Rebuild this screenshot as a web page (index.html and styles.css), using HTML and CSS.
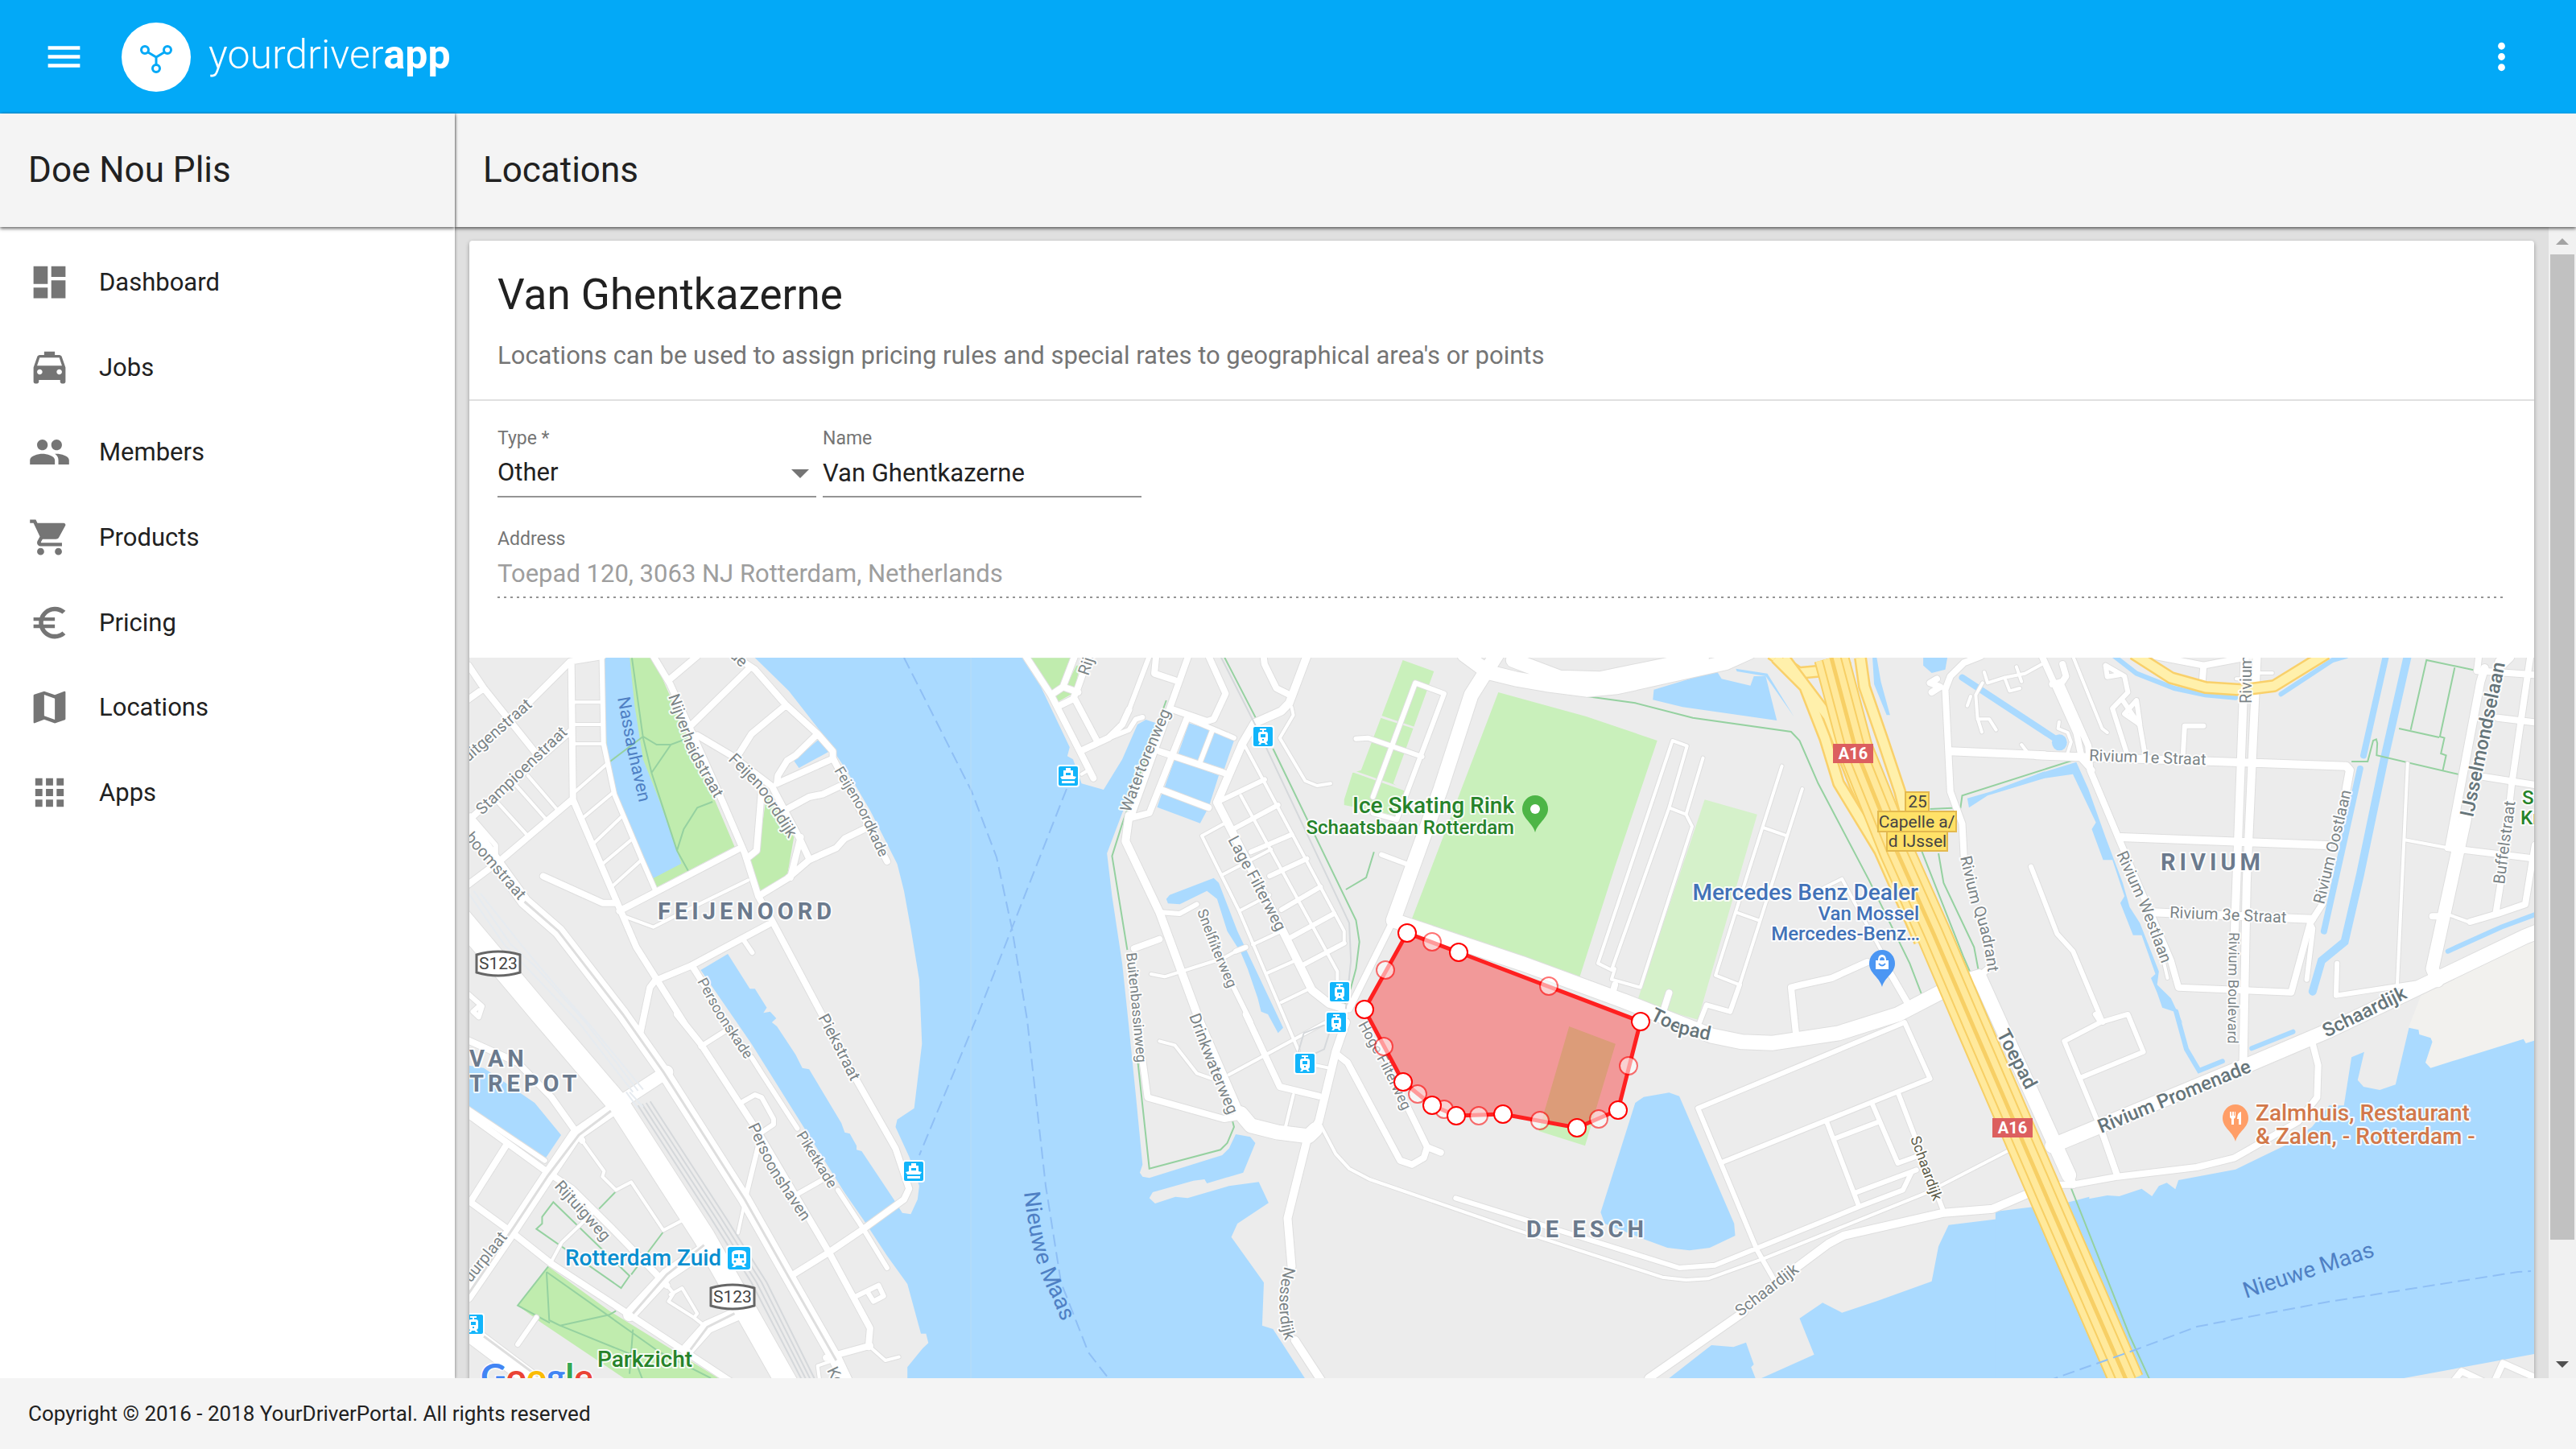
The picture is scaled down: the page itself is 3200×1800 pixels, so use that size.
FILE: index.html
```html
<!DOCTYPE html>
<html lang="en">
<head>
<meta charset="utf-8">
<meta name="viewport" content="width=device-width, initial-scale=1">
<title>Locations - yourdriverapp</title>
<link rel="stylesheet" href="styles.css">
</head>
<body>
<header class="topbar">
  <button class="icon-button" type="button" aria-label="Toggle menu"><svg class="icon" viewBox="0 0 24 24"><path d="M3 18h18v-2H3v2zm0-5h18v-2H3v2zm0-7v2h18V6H3z"/></svg></button>
  <a class="brand" href="#">
    <svg class="brand-mark" viewBox="0 0 86 86" aria-hidden="true"><circle class="disc" cx="43" cy="43" r="43"/><path d="M33 37l10 6 10-6M43 43v9"/><circle cx="29" cy="34" r="4.500"/><circle cx="57" cy="34" r="4.500"/><circle cx="43" cy="57" r="4.500"/></svg>
    <span class="brand-name">yourdriver<b>app</b></span>
  </a>
  <button class="icon-button more" type="button" aria-label="More"><svg class="icon" viewBox="0 0 24 24"><path d="M12 8c1.100 0 2-.9 2-2s-.9-2-2-2-2 .9-2 2 .9 2 2 2zm0 2c-1.100 0-2 .9-2 2s.9 2 2 2 2-.9 2-2-.9-2-2-2zm0 6c-1.100 0-2 .9-2 2s.9 2 2 2 2-.9 2-2-.9-2-2-2z"/></svg></button>
</header>

<div class="shell">
  <aside class="sidebar">
    <h2 class="bar">Doe Nou Plis</h2>
    <nav class="menu">
      <a href="#"><svg class="icon" viewBox="0 0 24 24"><path d="M3 13h8V3H3v10zm0 8h8v-6H3v6zm10 0h8V11h-8v10zm0-18v6h8V3h-8z"/></svg>Dashboard</a>
      <a href="#"><svg class="icon" viewBox="0 0 24 24"><path d="M18.920 6.010C18.720 5.420 18.160 5 17.500 5H15V3H9v2H6.500c-.66 0-1.210.42-1.420 1.010L3 12v8c0 .55.45 1 1 1h1c.55 0 1-.45 1-1v-1h12v1c0 .55.45 1 1 1h1c.55 0 1-.45 1-1v-8l-2.080-5.990zM6.500 16c-.83 0-1.500-.67-1.500-1.500S5.670 13 6.500 13s1.500.67 1.500 1.500S7.330 16 6.500 16zm11 0c-.83 0-1.500-.67-1.500-1.500s.67-1.500 1.500-1.500 1.500.67 1.500 1.500-.67 1.500-1.500 1.500zM5 11l1.500-4.500h11L19 11H5z"/></svg>Jobs</a>
      <a href="#"><svg class="icon" viewBox="0 0 24 24"><path d="M16 11c1.660 0 2.990-1.340 2.990-3S17.660 5 16 5s-3 1.340-3 3 1.340 3 3 3zm-8 0c1.660 0 2.990-1.340 2.990-3S9.660 5 8 5 5 6.340 5 8s1.340 3 3 3zm0 2c-2.330 0-7 1.170-7 3.500V19h14v-2.500c0-2.330-4.670-3.500-7-3.500zm8 0c-.29 0-.62.020-.97.050 1.160.84 1.970 1.970 1.970 3.450V19h6v-2.500c0-2.330-4.670-3.500-7-3.500z"/></svg>Members</a>
      <a href="#"><svg class="icon" viewBox="0 0 24 24"><path d="M7 18c-1.100 0-1.990.9-1.990 2S5.900 22 7 22s2-.9 2-2-.9-2-2-2zM1 2v2h2l3.600 7.590-1.350 2.450c-.16.280-.25.610-.25.960 0 1.100.9 2 2 2h12v-2H7.420c-.14 0-.25-.11-.25-.25l.03-.12.9-1.630h7.450c.75 0 1.410-.41 1.750-1.030l3.580-6.490c.08-.14.120-.31.120-.48 0-.55-.45-1-1-1H5.210l-.94-2H1zm16 16c-1.100 0-1.990.9-1.990 2s.89 2 1.990 2 2-.9 2-2-.9-2-2-2z"/></svg>Products</a>
      <a href="#"><svg class="icon" viewBox="0 0 24 24"><path d="M15 18.500c-2.510 0-4.680-1.420-5.760-3.500H15v-2H8.580c-.05-.33-.08-.66-.08-1s.03-.67.080-1H15V9H9.240C10.320 6.920 12.500 5.500 15 5.500c1.610 0 3.090.59 4.230 1.570L21 5.300C19.410 3.870 17.300 3 15 3c-3.920 0-7.240 2.510-8.480 6H3v2h3.060c-.04.33-.06.66-.06 1s.02.67.06 1H3v2h3.520c1.240 3.490 4.560 6 8.480 6 2.310 0 4.410-.87 6-2.300l-1.780-1.770c-1.130.98-2.600 1.570-4.220 1.570z"/></svg>Pricing</a>
      <a href="#"><svg class="icon" viewBox="0 0 24 24"><path d="M20.500 3l-.16.030L15 5.100 9 3 3.360 4.900c-.21.070-.36.250-.36.480V20.500c0 .28.220.5.500.5l.16-.03L9 18.900l6 2.100 5.640-1.900c.21-.07.36-.25.360-.48V3.500c0-.28-.22-.5-.5-.5zM15 19l-6-2.110V5l6 2.110V19z"/></svg>Locations</a>
      <a href="#"><svg class="icon" viewBox="0 0 24 24"><path d="M4 8h4V4H4v4zm6 12h4v-4h-4v4zm-6 0h4v-4H4v4zm0-6h4v-4H4v4zm6 0h4v-4h-4v4zm6-10v4h4V4h-4zm-6 4h4V4h-4v4zm6 6h4v-4h-4v4zm0 6h4v-4h-4v4z"/></svg>Apps</a>
    </nav>
  </aside>

  <main class="content">
    <h2 class="bar">Locations</h2>
    <div class="viewport">
      <div class="scroller">
        <section class="card">
          <div class="card-head">
            <h1>Van Ghentkazerne</h1>
            <p>Locations can be used to assign pricing rules and special rates to geographical area's or points</p>
          </div>
          <form class="form">
            <div class="row">
              <div class="field">
                <label for="type">Type *</label>
                <div class="select"><select id="type"><option>Other</option></select><svg viewBox="0 0 22 11" aria-hidden="true"><path d="M0 0h22L11 11z"/></svg></div>
              </div>
              <div class="field">
                <label for="name">Name</label>
                <input id="name" type="text" value="Van Ghentkazerne">
              </div>
            </div>
            <div class="field wide">
              <label for="address">Address</label>
              <input id="address" type="text" value="Toepad 120, 3063 NJ Rotterdam, Netherlands" disabled>
            </div>
          </form>

          <svg class="map" viewBox="583 817 2565 1000" role="img" aria-label="Map of Rotterdam around Toepad">
            <defs>
              <g id="tram"><rect class="halo" x="-14" y="-14" width="28" height="28" rx="4"/><rect class="transit" x="-12" y="-12" width="24" height="24" rx="2"/><path class="white" d="M-4 -10h8v2h-3v2h2q3 0 3 3v7q0 2-2 3l2 3h-3l-1-2h-4l-1 2h-3l2-3q-2-1-2-3v-7q0-3 3-3h2v-2h-3z"/><path class="transit" d="M-3 -3h6v4h-6zM-1 3h2v2h-2z"/></g>
              <g id="train"><rect class="halo" x="-16" y="-16" width="32" height="32" rx="4"/><rect class="transit" x="-14" y="-14" width="28" height="28" rx="3"/><path class="white" d="M-9 -6q0-4 9-4t9 4v11q0 2-3 3l3 3h-4l-2-2h-6l-2 2h-4l3-3q-3-1-3-3z"/><path class="transit" d="M-6 -5h5v5h-5zM1 -5h5v5h-5z"/><circle class="transit" cx="-5" cy="4" r="1.500"/><circle class="transit" cx="5" cy="4" r="1.500"/></g>
              <g id="ferry"><rect class="halo" x="-14" y="-14" width="28" height="28" rx="4"/><rect class="transit" x="-12" y="-12" width="24" height="24" rx="2"/><path class="white" d="M-3 -10h6v3h3v7l4 1-2 3h-16l-2-3 4-1v-7h3zM-8 6h16v3h-16z"/><path class="transit" d="M-3 -4h6v3h-6z"/></g>
              <path id="pin" d="M0 29C-3 17-16 12-16 0A16 17 0 0 1 16 0C16 12 3 17 0 29z"/>
              <path id="shield" d="M-27 -11Q0 -19 27 -11V11Q0 19-27 11z"/>

              <!-- Street network; drawn once as casing and once as fill -->
              <g id="streets" transform="matrix(.42092 0 0 .33333 580 810)">
                <g>
                  <path class="w8" d="M5 50L50 135L215 395M0 180L50 135M0 395L190 180L305 35L400 15M308 35L313 550L500 1100L640 1380M20 610L310 290M0 870L100 775L310 550M225 835L400 935H435M450 965L800 735M550 15L600 120L735 500L820 750L860 910L900 1000L1060 1380M600 100L680 15M660 275L830 65M680 310L780 385L900 500L980 690L1010 770M790 15L850 65L940 195L1035 305L1080 370V395L1240 780M800 385L840 305L940 200M915 490L1075 400M915 490L918 460L945 405L970 385L1035 305M945 585L1010 540L1050 530L1100 500M870 510L855 740L830 765M860 910L945 845L1010 775L1090 730L1115 695L1180 655M985 690L955 840M555 1225L660 1170L890 1015M555 1225L540 1250L510 1430M665 1170L700 1240"/>
                  <path class="w5" d="M10 610L85 720V770M398 15L403 340L435 530L515 770L555 885M815 1070L842 1120M0 1270L45 1320L35 1360L18 1340L40 1315"/>
                  <path class="w3" d="M310 187H398M310 270H400M315 342H403M320 520L415 415M340 620L430 525M375 712L458 612M400 790L485 700M427 875L515 775M180 460L265 585M130 475L235 625M90 560L180 685M830 850L620 980L550 1025L465 985"/>
                  <path class="w14" d="M0 630L90 790L170 930L270 1040L460 1350L580 1565L820 2040L950 2330L1090 2640L1120 2720"/>
                  <path class="w26" d="M-40 960L220 1350L450 1690L700 2180L960 2760"/>
                </g>
                <g transform="translate(0 1350)">
                  <path class="w14" d="M440 345L320 450L240 600L130 810L0 1050M450 330L590 215M480 1120L590 970L720 860M650 1250L710 1165L800 1115"/>
                  <path class="w22" d="M0 1180L200 1370"/>
                  <path class="w8" d="M0 95L150 180L250 310L340 470M0 370L120 480L240 590L310 650L430 800L560 970L590 1010M0 690L130 810L250 930L480 1120L780 1370M120 480L10 700M1060 1280L1190 1235M950 980L1065 890L1170 800L1290 690L1305 650L1265 500L1150 245L1060 30M620 0L690 110L860 440L1070 890L1190 1170L1185 1240"/>
                  <path class="w5" d="M0 350L230 545M690 120L765 60M815 325L850 300L870 310L905 390V410L870 440M1170 800L1240 945M860 490L825 670M975 670L1045 620M870 220L840 160M975 425L870 220M1095 655L1170 800M1150 1050L1215 1010L1230 1050L1200 1070L1185 1040M150 1230L205 1130"/>
                  <path class="w3" d="M345 480L405 585L400 605L440 655L485 625L580 805L640 765M250 920L280 850L380 730M590 1010L610 1040L595 1070L670 1130L680 1115L635 1020L600 1045M670 1130L700 1160M1190 1240L1235 1290L1275 1277M825 670L800 815M1040 1356L1035 1310L1080 1290"/>
                </g>
                <g transform="translate(1544 0)">
                  <path class="w8" d="M105 15L180 160L265 370L305 470M180 160L215 130L250 15M205 200L245 175L260 130L292 15M215 130L260 150M250 175L315 330M265 370L350 320L390 270L410 215M585 15L530 210L420 600M490 15L485 80L545 105M645 15L695 155L660 250L640 258L530 210M410 620L470 600L580 250M500 370L690 450M510 515L645 580M807 15L810 45L845 135L885 160M425 1105L500 1070M1190 1000L1060 1330"/>
                  <path class="w10" d="M410 610L400 705L500 970L620 1380M935 15L883 190L860 220L780 265L745 340L670 560L860 1030L950 1260L1000 1310L1050 1330"/>
                  <path class="w5" d="M350 320L410 290L430 250L450 243M410 215L470 15M580 245L720 320M655 295L620 410M670 560L810 475M710 665L850 570M770 745L890 680M825 835L935 770M860 960L975 875M885 1065L1015 975M925 1165L1045 1085M505 970L560 975L610 940M725 1115L755 1100M715 1240L770 1380M1130 600L1200 625L1340 155L1255 115L1130 540M1080 323L1115 320L1275 390M1155 755L1240 795"/>
                  <path class="w3" d="M890 205L895 235L855 320L930 480L965 498L1005 490M750 345L1045 1040V1085M740 535L1025 1190V1230M690 640L625 685L735 965L910 1485M685 830L830 735M735 965L825 905M775 1090L860 1040M820 1195L900 1150M860 1305L950 1250M475 1200L515 1210L690 1140L725 1115M270 455L290 440"/>
                  <path class="w18" d="M1500 0L1470 60L1420 160L1330 510L1190 1000L1568 1160L1870 1300L1970 1350L2130 1430L2220 1453L2310 1457L2505 1420L2680 1350L2825 1255"/>
                  <path class="w18" d="M1400 10L1470 75L1550 100L1640 120L1760 140L1850 130L2170 40L2240 0M1544 30L1680 95L1800 100L2100 22"/>
                </g>
                <g transform="translate(1544 1350)">
                  <path class="w10" d="M1050 30L1020 140L970 400L935 470L878 760L890 940M900 1215L980 1370"/>
                  <path class="w18" d="M740 370L770 415L850 440L940 454L960 430"/>
                  <path class="w10" d="M620 30L740 380"/>
                  <path class="w8" d="M755 0L855 270L970 305M450 170L465 310L690 390L740 380M1020 145L1055 180L1210 545L1245 560L1280 535L1290 495L1230 340M1290 495L1330 515"/>
                  <path class="w3" d="M500 100L545 115L610 220L655 240M705 225L990 30M895 300L870 430M960 190L1000 200M970 400L1020 520L1060 575L1120 615L1544 800L1984 980L2054 990L2119 985L2284 910L2764 665L3010 505"/>
                </g>
                <g transform="translate(3088 0)">
                  <path class="w3" d="M250 1160L470 330L513 350L460 580L290 1185ZM460 580L510 605M560 395L510 605L528 650L375 1250L290 1220L300 1180M793 425L597 1205L668 1240L853 510M740 655L808 685M658 970L725 1000M1390 75L1400 115L1450 95L1510 80L1568 40M1385 115L1365 160L1370 245L1383 298M1370 250L1405 250L1425 290M1450 95L1465 145L1495 135M1485 55L1500 110M1340 200L1350 165M1500 345L1515 370M915 880L970 845L1010 940L1085 1110"/>
                  <path class="w8" d="M300 1240L290 1285M460 1270L445 1330M835 1430L820 1250L850 1240L940 1215L1045 1155M1105 1180L1160 1300M1250 100L1230 115L1260 130L1235 150M1380 15L1330 40L1290 90L1275 140L1290 520L1325 640L1330 760"/>
                  <path class="w5" d="M668 1240L640 1340L570 1315L550 1380"/>
                  <path class="w10" d="M1290 370L1568 385"/>
                  <path class="w18" d="M1335 1225L1375 1210M1375 1210L1450 1420L1640 1950"/>
                  <path class="w8" d="M1375 1210L1410 1170M1600 1840L1655 1985"/>
                  <path class="w10" d="M400 2706L680 2460M840 2290L930 2205L975 2175L1270 2090L1415 2075L1535 2010"/>
                  <path class="w5 pale" d="M-170 2035L490 2295L595 2285L1025 2065L1150 2005L1175 1940M545 1700L1155 1380L1230 1590L620 1900M545 1700L720 2230L770 2340M925 1750L1020 2065M1060 1685L1135 1905L1200 1875M945 1815L1080 1750M1135 1640L1270 2085M1010 2015L1190 1930M1528 800L1605 1050L1652 1115L1740 1380"/>
                </g>
                <g transform="matrix(1.0152 0 0 1 4633 0)">
                  <path class="w10" d="M0 385L900 425L910 440L900 510M245 690L845 720M335 970L800 995M605 15L575 1050M640 15L610 860L600 1540M1302 60L1290 110L1200 720"/>
                  <path class="w8" d="M15 15L115 300L130 390M45 120L75 110L85 90L75 45M70 120L150 350L155 440L240 700L390 1150L412 1250L740 1268L795 1010L830 940M125 390L160 440M345 15L485 50L600 22M485 50L480 130M1285 15L1280 70L1448 85M1435 15L1380 500L1350 850L1335 970M1340 245L1448 262M1300 465L1448 495M1195 730L1448 770M1448 720L1420 940L1340 975L1260 1005M1150 985H1175"/>
                  <path class="w5" d="M200 50L255 90L265 150L220 210L265 390M200 50L205 92L240 85M250 180L300 275L315 385M290 180L255 230L300 270ZM425 385L430 275H485M795 1010L803 1030L785 1220M873 1160L870 1280L1100 1235"/>
                  <path class="w3" d="M105 15L190 285L205 300M580 100H600M640 78H685M1078 415L1048 1240M1070 700L1195 730M1200 980L1260 1008M65 260L62 285L90 300L100 335L90 375M370 1160L380 1215"/>
                  <path class="w14" d="M1370 15L1350 40M1245 620L1150 1180L1165 1225"/>
                  <path class="w18" d="M1460 1040L1420 1060L1160 1220L850 1410L630 1530L45 1840"/>
                </g>
                <g transform="matrix(1.0152 0 0 1 4633 1350)">
                  <path class="w8" d="M800 100L818 190L815 310L760 400L650 480L575 535L465 570L235 605L105 635H55M190 440L235 605M1210 1370L1235 1330L1300 1370M1330 1370L1355 1300L1460 1360"/>
                  <path class="w5 pale" d="M185 30L80 100L190 440M170 0L185 30L265 0L310 140L130 235"/>
                </g>
              </g>
              <path id="motorway" d="M2275 817L2305 930L2356 1057L2402 1160L2449 1270L2545 1493L2642 1716"/>
              <g id="ramps">
                <path d="M2206 817L2242 853L2267 917L2284 973L2335 1057L2385 1170"/>
                <path d="M2216 817L2271 890L2305 977L2343 1057L2390 1150"/>
                <path d="M2311 817L2316 853L2339 920L2360 983L2372 1030"/>
              </g>
            </defs>

            <rect class="land" x="583" y="817" width="2565" height="1000"/>

            <!-- Parks and water -->
            <g transform="matrix(.42092 0 0 .33333 580 810)">
              <path class="park" d="M400 22H550L640 280L790 725L557 878L545 840L430 480L400 300zM885 530L965 690L945 835L865 893L835 775L860 740z"/>
              <path class="park" d="M240 2290L420 2455L760 2720H480L220 2500L150 2435z"/>
              <path class="beige" d="M6103 1050L5770 1270L5730 1400L5790 1560L6103 1450z"/>
              <path class="water" d="M845 15L950 145L1040 290L1120 440L1190 590L1270 790L1290 890L1310 1030L1335 1220L1343 1460L1320 1700L1270 1742L1265 1770L1305 1880L1335 1990L1330 2040L1310 2095L1285 2090L1260 2040L1165 1860L1150 1855V1840L1130 1795L1115 1790L1105 1755L1010 1555L990 1550L970 1500L915 1395L900 1380L913 1365L895 1340L875 1345L885 1325L850 1255H835L770 1125L690 1185L840 1460L1115 2015L1170 2115L1240 2250L1300 2355L1340 2540H1355L1362 2575L1345 2595L1300 2665V2720H2480L2379 2523L2347 2510L2352 2350L2256 2180L2274 2130L2366 2053L2337 1975L2249 1990L2127 2035L2091 2030L2031 2055L2014 2035L2024 2013L2144 1970L2177 1965L2184 1980L2291 1940L2327 1830L2312 1807L2269 1797L2249 1850L2229 1875L2014 1960L1994 1955L1986 1940L1994 1910L1974 1650L1954 1400L1934 1160L1904 910L1889 750L1934 600L2004 400L2034 265L2004 252L1979 270L1934 400L1879 513L1814 490L1789 400L1772 388L1779 355L1694 130L1635 15z"/>
              <path class="water" d="M403 15H480L495 200L520 400L570 560L633 788L550 843L460 600L420 440L403 200zM1042 322L1070 370L980 432L965 405zM0 1540L50 1550L200 1680L278 1800L233 1885L0 1700z"/>
              <g transform="translate(1544 0)">
                <path class="park" d="M105 22H240L215 130L180 150zM190 160L215 140L250 150L200 185zM255 50H265L250 140L225 125z"/>
                <path class="park soft" d="M1218 30L1310 72L1190 490L1225 520L1200 610L1045 570V550L1070 450L1095 440zM1500 150L1759 240L1969 330L1844 800L1734 1235L1240 1010z"/>
                <path class="land" d="M1150 235L1255 280V287L1147 243zM1068 447L1230 520V510L1070 440z"/>
                <path class="water" d="M587 265L650 290L615 405L555 380zM660 297L720 330L690 440L628 410zM545 398L675 460L645 580L515 505zM507 527L640 590L620 638L493 578zM520 920L530 905L660 842L675 860L730 1040L865 1400L850 1420L820 1350L800 1340L790 1290L760 1180L740 1120L700 1040L670 920L640 890L560 940L525 937z"/>
              </g>
              <g transform="translate(3088 0)">
                <path class="park light" d="M565 550L720 605L545 1370L365 1305z"/>
                <path class="park soft" d="M165 1395L302 1460L212 1840L75 1785z"/>
                <path class="water" d="M415 140L600 70L615 100L700 125L710 90H745L778 255L500 205L412 178zM657 62L750 80L828 240L745 90L660 72zM1060 15H1072L1085 110L1112 235H1102L1065 120zM1210 15H1282L1275 65L1235 78L1210 50zM1340 545L1410 520L1568 445V470L1400 535L1345 580z"/>
                <path class="water" d="M360 1680L385 1658L460 1642L490 1655L652 2130L655 2175L580 2220L520 2230L455 2220L390 2190L270 2130L258 2088zM450 2716L585 2583L650 2590L687 2573L710 2655L702 2665L718 2716zM715 2716L888 2618L845 2483L913 2425L970 2462L1075 2418L1235 2345L1255 2215L1285 2135L1450 2110L1540 2083L1700 2030V2716z"/>
                <path class="canal w8" d="M1325 95L1620 340"/>
              </g>
              <g transform="matrix(1.0152 0 0 1 4633 0)">
                <path class="canal w5" d="M220 10L290 80L400 135L490 160L578 170M710 157L860 30L900 15"/>
                <path class="canal w8" d="M1015 15L950 385M940 435L835 1040"/>
                <path class="canal w10" d="M1078 15L1010 400L940 830L895 1080L828 1150L802 1265"/>
                <path class="canal w5" d="M1195 1115L1350 1025L1455 975M625 1477L745 1415M405 1340L435 1480L472 1560L540 1525"/>
                <ellipse class="water" cx="66" cy="337" rx="22" ry="30"/>
                <path class="water" d="M0 455L115 410L150 510L200 690L250 860L270 950L300 1010L355 1190L350 1240L390 1290L425 1385L400 1340L365 1325L350 1270L332 1215L345 1200L305 1055H280L243 935L255 910L220 775H193L160 660L172 635L105 455L0 475z"/>
                <path class="water" d="M-120 2085L100 2050L205 2025L240 2028L305 2000L335 2028L355 1990L378 1978L403 2002L412 1968L578 1928L720 1840L800 1770L850 1690H893L915 1510L952 1490L933 1595L950 1620L997 1632L1043 1612L1082 1400L1110 1408L1112 1425L1145 1438L1150 1453L1130 1530L1145 1550L1415 1442L1422 1458L1460 1443V2613L1025 2716H-120z"/>
              </g>
            </g>

            <!-- Footpaths and park outlines -->
            <g class="footpath" transform="matrix(.42092 0 0 .33333 580 810)">
              <path d="M487 22L520 320L545 450L620 740L655 820M415 415L520 315L560 345H602L650 322M602 345L545 450M620 740L640 660L680 580L725 558M255 2050L480 2325L455 2370L205 2150L222 2130V2105ZM580 2160L485 2320M440 2010L390 2075M235 2310L243 2490L275 2510L420 2470L440 2455M235 2310L570 2610L720 2706M275 2510L490 2620L520 2716M490 2525L480 2690M240 2290L150 2435L245 2500"/>
              <path transform="translate(1544 0)" d="M690 15L790 260M835 360L1080 1000L1090 1080L1080 1180L1065 1250L1045 1320M1050 885L1110 840L1133 745M520 180L390 640L360 760L405 1110M435 1515L470 1925L680 1855L700 1830L720 1770L715 1745M1475 90L1674 150L1904 190L2074 245L2364 297L2389 330L2444 490L2594 850L2714 1160L2749 1275"/>
              <path transform="translate(3088 0)" d="M1205 740L1330 1140L1420 1400L1600 1850L1820 2550L1880 2716M1255 750L1270 860L1360 1100L1375 1200M1230 585L1320 580L1325 535L1660 400"/>
              <path transform="matrix(1.0152 0 0 1 4633 0)" d="M1053 285L1170 318M1087 290L1133 30L1275 68M1215 58L1172 315L1185 320L1175 378L1190 385L1180 443M915 408H962L978 330L987 325L990 340L988 385L1240 460"/>
            </g>

            <use class="casing" href="#streets"/>
            <use class="fill" href="#streets"/>

            <!-- Median strips and rail -->
            <g class="rail" transform="matrix(.42092 0 0 .33333 580 810)">
              <path class="median" d="M170 930L270 1040L460 1350L580 1565L820 2040L950 2330L1090 2640M425 1710L330 1800L240 1950L140 2140L0 2400M490 2465L590 2320L700 2210M660 2600L710 2515L790 2465M50 2550L210 2700"/>
              <path d="M505 1690L720 2110L840 2350L990 2716M517 1685L735 2110L855 2350L1003 2716M529 1680L750 2110L870 2350L1016 2716M541 1675L765 2110L885 2350L1029 2716"/>
              <path class="yard" d="M0 890L110 1090L180 1180L330 1380L490 1640M20 890L130 1090L200 1170L350 1380L505 1635M40 900L160 1090L280 1270L370 1400L520 1630M470 1640L505 1700M480 1640L520 1695"/>
              <path d="M2224 15L2334 290L2604 1010L2609 1150L2594 1330M2454 1490L2470 1420L2530 1390M2550 1400L2530 1480L2480 1510"/>
            </g>

            <!-- Motorway and slip roads -->
            <g class="motorway">
              <path class="slip-edge" d="M2200 812L2235 836L2300 830"/><path class="slip" d="M2200 812L2235 836L2300 830"/>
              <use class="slip-edge" href="#ramps"/><use class="slip" href="#ramps"/>
              <use class="lane-edge" href="#motorway"/><use class="lane" href="#motorway"/>
              <use class="lane-line" href="#motorway"/><use class="lane-inner" href="#motorway"/><use class="lane-mid" href="#motorway"/>
              <path class="slip-edge" d="M2650 812L2697 842L2740 854L2786 857L2825 852L2890 812"/><path class="slip" d="M2650 812L2697 842L2740 854L2786 857L2825 852L2890 812"/>
            </g>

            <g class="ferry-line">
              <path d="M1123 817L1207 983L1238 1065L1257 1153L1276 1267L1299 1473L1318 1593L1352 1680L1380 1716M1325 980L1257 1153L1215 1260L1142 1435M2542 1716L2652 1677L2729 1648L2893 1617L3128 1580L3144 1579"/>
            </g>
            <path class="seam" d="M1206 817V1717"/>

            <!-- Street and water names -->
            <defs>
              <path id="t1" d="M560 966L662 877"/><path id="t2" d="M599 1013L710 907"/><path id="t3" d="M577 1041L655 1131"/>
              <path id="t4" d="M767 867L780 936L797 1010"/><path id="t5" d="M830 865L855 935L895 1005"/><path id="t6" d="M904 944L940 980L985 1050"/>
              <path id="t7" d="M1036 957L1065 1005L1102 1085"/><path id="t8" d="M866 1219L890 1263L935 1330"/><path id="t9" d="M1016 1264L1035 1300L1068 1365"/>
              <path id="t10" d="M929 1399L955 1455L1005 1530"/><path id="t11" d="M989 1410L1038 1490"/><path id="t12" d="M688 1474L765 1560"/>
              <path id="t13" d="M554 1632L631 1537"/><path id="t14" d="M1272 1481Q1282 1570 1305 1608Q1318 1640 1336 1680"/><path id="t15" d="M1404 1010L1424 955L1458 875"/>
              <path id="t16" d="M1525 1043L1556 1100L1595 1175"/><path id="t17" d="M1487 1132L1505 1180L1533 1245"/><path id="t18" d="M1399 1184L1405 1240L1413 1330"/>
              <path id="t19" d="M1477 1262L1498 1318L1532 1400"/><path id="t20" d="M1687 1273L1715 1323L1750 1395"/><path id="t21" d="M1596 1573Q1580 1630 1602 1680"/>
              <path id="t22" d="M2049 1266L2085 1284L2140 1296"/><path id="t23" d="M2435 1065L2448 1120Q2466 1165 2470 1215"/><path id="t24" d="M2480 1284L2530 1380"/>
              <path id="t25" d="M2373 1414L2408 1510"/><path id="t26" d="M2162 1636L2245 1572"/><path id="t27" d="M2797 874V790"/>
              <path id="t28" d="M2595 945L2760 951"/><path id="t29" d="M2887 1124L2905 1050L2924 970"/><path id="t30" d="M2695 1140L2860 1147"/>
              <path id="t31" d="M2629 1061L2660 1130L2692 1215"/><path id="t32" d="M2769 1158L2767 1330"/><path id="t33" d="M3072 1016L3090 930L3115 810"/>
              <path id="t34" d="M3111 1099L3126 985"/><path id="t35" d="M2890 1289L3010 1230"/><path id="t36" d="M2610 1408L2810 1326"/>
              <path id="t37" d="M2790 1613L2970 1554"/><path id="t38" d="M890 800L940 848"/><path id="t39" d="M1352 840L1368 790"/><path id="t40" d="M1027 1702L1050 1750"/>
            </defs>
            <g class="street">
              <text><textPath href="#t1" startOffset="100%" text-anchor="end">uitgenstraat</textPath></text>
              <text><textPath href="#t2">Stampioenstraat</textPath></text>
              <text><textPath href="#t3">boomstraat</textPath></text>
              <text><textPath href="#t5">Nijverheidstraat</textPath></text>
              <text><textPath href="#t6">Feijenoorddijk</textPath></text>
              <text class="small"><textPath href="#t7">Feijenoordkade</textPath></text>
              <text class="small"><textPath href="#t8">Persoonskade</textPath></text>
              <text><textPath href="#t9">Piekstraat</textPath></text>
              <text><textPath href="#t10">Persoonshaven</textPath></text>
              <text class="small"><textPath href="#t11">Piketkade</textPath></text>
              <text><textPath href="#t12">Rijtuigweg</textPath></text>
              <text><textPath href="#t13" startOffset="100%" text-anchor="end">Vuurplaat</textPath></text>
              <text><textPath href="#t15">Watertorenweg</textPath></text>
              <text><textPath href="#t16">Lage Filterweg</textPath></text>
              <text class="small"><textPath href="#t17">Snelfilterweg</textPath></text>
              <text class="small"><textPath href="#t18">Buitenbassinweg</textPath></text>
              <text><textPath href="#t19">Drinkwaterweg</textPath></text>
              <text class="small"><textPath href="#t20">Hoge Filterweg</textPath></text>
              <text><textPath href="#t21">Nesserdijk</textPath></text>
              <text><textPath href="#t23">Rivium Quadrant</textPath></text>
              <text class="olive small"><textPath href="#t25">Schaardijk</textPath></text>
              <text><textPath href="#t26">Schaardijk</textPath></text>
              <text><textPath href="#t27">Rivium</textPath></text>
              <text><textPath href="#t28">Rivium 1e Straat</textPath></text>
              <text><textPath href="#t29">Rivium Oostlaan</textPath></text>
              <text><textPath href="#t30">Rivium 3e Straat</textPath></text>
              <text><textPath href="#t31">Rivium Westlaan</textPath></text>
              <text class="small"><textPath href="#t32">Rivium Boulevard</textPath></text>
              <text><textPath href="#t34">Buffelstraat</textPath></text>
              <text><textPath href="#t38">kade</textPath></text>
              <text><textPath href="#t39">Rijs</textPath></text>
              <text><textPath href="#t40">Ko</textPath></text>
            </g>
            <g class="street main">
              <text><textPath href="#t22">Toepad</textPath></text>
              <text><textPath href="#t24">Toepad</textPath></text>
              <text><textPath href="#t33">IJsselmondselaan</textPath></text>
              <text><textPath href="#t35">Schaardijk</textPath></text>
              <text><textPath href="#t36">Rivium Promenade</textPath></text>
            </g>
            <g class="water-name">
              <text class="small"><textPath href="#t4">Nassauhaven</textPath></text>
              <text><textPath href="#t14">Nieuwe Maas</textPath></text>
              <text><textPath href="#t37">Nieuwe Maas</textPath></text>
            </g>
            <g class="district">
              <text x="817" y="1142">FEIJENOORD</text><text x="583" y="1325">VAN</text><text x="583" y="1356">TREPOT</text>
              <text x="1896" y="1537">DE ESCH</text><text x="2684" y="1081">RIVIUM</text>
            </g>
            <g class="place">
              <text class="green" x="1881" y="1010" text-anchor="end">Ice Skating Rink</text>
              <text class="green sub" x="1881" y="1036" text-anchor="end">Schaatsbaan Rotterdam</text>
              <text class="green" x="742" y="1698">Parkzicht</text>
              <text class="green sub" x="3133" y="999">S</text><text class="green sub" x="3131" y="1024">Kr</text>
              <text class="cyan" x="702" y="1572">Rotterdam Zuid</text>
              <text class="blue" x="2383" y="1118" text-anchor="end">Mercedes Benz Dealer</text>
              <text class="blue sub" x="2384" y="1143" text-anchor="end">Van Mossel</text>
              <text class="blue sub" x="2385" y="1168" text-anchor="end">Mercedes-Benz…</text>
              <text class="orange" x="2802" y="1392">Zalmhuis, Restaurant</text>
              <text class="orange" x="2802" y="1421">&amp; Zalen, - Rotterdam -</text>
            </g>

            <g class="shields">
              <use href="#shield" x="619" y="1197"/><use href="#shield" x="910" y="1611"/>
              <text x="619" y="1204">S123</text><text x="910" y="1618">S123</text>
              <rect class="red" x="2277" y="924" width="50" height="24"/><rect class="red" x="2475" y="1389" width="50" height="24"/>
              <text class="on-red" x="2302" y="943">A16</text><text class="on-red" x="2500" y="1408">A16</text>
              <rect class="gold" x="2367" y="984" width="29" height="24"/><rect class="gold" x="2333" y="1008" width="97" height="25"/><rect class="gold" x="2344" y="1033" width="75" height="24"/>
              <text x="2382" y="1003">25</text><text x="2381" y="1028">Capelle a/</text><text x="2382" y="1052">d IJssel</text>
            </g>

            <use href="#tram" x="1569" y="915"/><use href="#tram" x="1664" y="1232"/><use href="#tram" x="1660" y="1270"/><use href="#tram" x="1621" y="1321"/><use href="#tram" x="588" y="1645"/>
            <use href="#ferry" x="1327" y="964"/><use href="#ferry" x="1135" y="1455"/><use href="#train" x="918" y="1563"/>
            <use class="pin-green" href="#pin" x="1907" y="1005"/><circle class="white" cx="1907" cy="1005" r="6"/>
            <use class="pin-blue" href="#pin" x="2338" y="1197"/><path class="white" d="M2330 1193h3q0-7 5-7t5 7h3v11h-16zm5 0h6q0-4-3-4t-3 4z"/><path class="smile" d="M2334 1197q4 5 8 0"/>
            <use class="pin-orange" href="#pin" x="2777" y="1389"/><path class="white" d="M2770 1381h2v5h1v-5h2v5h1v-5h1v7l-2 2v7h-3v-7l-2-2zM2784 1381v16h-3v-7h-2q0-8 5-9z"/>

            <g class="logo"><text x="597" y="1726"><tspan class="g-blue">G</tspan><tspan class="g-red">o</tspan><tspan class="g-yellow">o</tspan><tspan class="g-blue">g</tspan><tspan class="g-green">l</tspan><tspan class="g-red">e</tspan></text></g>

            <!-- Editable area -->
            <g class="area">
              <path d="M1748 1159L1812 1183L2038 1269L2010 1379L1959 1401L1867 1384L1809 1386L1779 1373L1743 1344L1695 1254z"/>
              <g class="mid"><circle cx="1779" cy="1170" r="11"/><circle cx="1924" cy="1225" r="11"/><circle cx="2023" cy="1324" r="11"/><circle cx="1986" cy="1390" r="11"/><circle cx="1913" cy="1392" r="11"/><circle cx="1837" cy="1386" r="11"/><circle cx="1794" cy="1378" r="11"/><circle cx="1761" cy="1359" r="11"/><circle cx="1719" cy="1300" r="11"/><circle cx="1721" cy="1205" r="11"/></g>
              <g class="vertex"><circle cx="1748" cy="1159" r="11"/><circle cx="1812" cy="1183" r="11"/><circle cx="2038" cy="1269" r="11"/><circle cx="2010" cy="1379" r="11"/><circle cx="1959" cy="1401" r="11"/><circle cx="1867" cy="1384" r="11"/><circle cx="1809" cy="1386" r="11"/><circle cx="1779" cy="1373" r="11"/><circle cx="1743" cy="1344" r="11"/><circle cx="1695" cy="1254" r="11"/></g>
            </g>
          </svg>
        </section>
      </div>
      <div class="scrollbar" aria-hidden="true">
        <svg class="up" viewBox="0 0 16 8"><path d="M0 8h16L8 0z"/></svg>
        <div class="thumb"></div>
        <div class="rest"></div>
        <svg class="down" viewBox="0 0 16 8"><path d="M0 0h16L8 8z"/></svg>
      </div>
    </div>
  </main>
</div>

<footer class="footer">Copyright © 2016 - 2018 YourDriverPortal. All rights reserved</footer>
</body>
</html>
```
FILE: styles.css
```css
*{box-sizing:border-box}
body{margin:0;height:100vh;display:flex;flex-direction:column;font-family:Roboto,"Liberation Sans",sans-serif;color:#212121;background:#e0e0e0}
h1,h2,p{margin:0;font-weight:400}
a{color:inherit;text-decoration:none}
.icon{display:block;width:53px;height:53px;fill:currentColor;flex:none}

.topbar{flex:none;height:141px;display:flex;align-items:center;padding:0 66px 0 53px;background:#03a9f7;color:#fff}
.icon-button{border:0;padding:0;background:none;color:inherit;cursor:pointer}
.more{margin-left:auto}
.brand{display:flex;align-items:center;gap:22px;margin-left:45px}
.brand-mark{width:86px;height:86px;fill:none;stroke:#03a9f7;stroke-width:3}
.brand-mark .disc{fill:#fff;stroke:none}
.brand-name{font-size:50px;font-weight:300;line-height:58px;padding-bottom:6px}
.brand-name b{font-weight:700}

.shell{flex:1;min-height:0;display:flex}
.bar{position:relative;z-index:1;flex:none;height:141px;display:flex;align-items:center;padding:0 35px 2px;font-size:44px;background:#f4f4f4;box-shadow:0 2px 4px rgba(0,0,0,.6)}
.sidebar{position:relative;z-index:2;flex:none;width:565px;display:flex;flex-direction:column;background:#fff;box-shadow:1px 0 3px rgba(0,0,0,.3)}
.menu{display:grid;grid-template-rows:repeat(7,1fr);height:755px;padding-top:16px;font-size:31px}
.menu a{display:flex;align-items:center;gap:35px;padding:0 35px}
.menu .icon{color:#757575}

.content{flex:1;min-width:0;display:flex;flex-direction:column}
.viewport{flex:1;min-height:0;display:flex}
.scroller{flex:1;min-width:0;overflow-y:auto;scrollbar-width:none;padding:17px 18px}
.card{background:#fff;border-radius:4px 4px 0 0;box-shadow:0 2px 5px rgba(0,0,0,.35)}
.card-head{padding:35px 35px 36px;border-bottom:2px solid #e0e0e0}
.card-head h1{font-size:53px;line-height:64px}
.card-head p{margin-top:26px;font-size:31px;line-height:36px;color:#757575}
.form{padding:33px 36px 74px 35px;display:flex;flex-direction:column;gap:38px}
.row{display:flex;gap:8px}
.field{width:396px;display:flex;flex-direction:column;gap:10px}
.field.wide{width:auto}
.field label{font-size:23px;line-height:28px;color:#757575}
.field input,.field select{width:100%;height:49px;margin:0;padding:0 0 11px;border:0;border-bottom:2px solid #949494;border-radius:0;background:none;font:31px/36px Roboto,"Liberation Sans",sans-serif;color:#212121;appearance:none;outline:0}
.field input:disabled{color:#9e9e9e;border-bottom:0;background:repeating-linear-gradient(90deg,#949494 0 3px,transparent 3px 8px) left bottom/100% 2px no-repeat;padding-bottom:13px}
.select{position:relative;display:flex}
.select svg{position:absolute;right:9px;top:14px;width:22px;height:11px;fill:#757575}
.map{display:block;width:100%;height:auto}

.scrollbar{flex:none;width:34px;padding:14px 2px 13px;display:flex;flex-direction:column;background:#f1f1f1}
.scrollbar svg{flex:none;width:16px;height:8px;align-self:center;fill:#a3a3a3}
.scrollbar .down{fill:#505050}
.thumb{flex:1225 0 0;margin-top:12px;background:#c1c1c1}
.rest{flex:151 0 0}
.footer{flex:none;position:relative;z-index:3;height:88px;display:flex;align-items:center;padding:0 35px;background:#f4f4f4;font-size:26px}

/* Map */
.map path,.map use{vector-effect:non-scaling-stroke}
.land{fill:#ececec}
.beige{fill:#f2f1ee}
.park{fill:#c0ecae}
.park.soft{fill:#c9f0bb}
.park.light{fill:#d5f1ca}
.water{fill:#aadaff}
.w3{--w:4px}.w5{--w:6px}.w8{--w:8px}.w10{--w:10px}.w14{--w:16px}.w18{--w:18px}.w22{--w:22px}.w26{--w:27px}
#streets path{fill:none;stroke-linecap:round;stroke-linejoin:round;stroke-width:calc(var(--w) + var(--case))}
.casing{--case:2px;stroke:#dedede}
.fill{--case:0px;stroke:#fff}
.fill .pale{stroke:#f7f7f7}
.canal{fill:none;stroke:#aadaff;stroke-width:var(--w);stroke-linecap:round}
.footpath{fill:none;stroke:#95d1a0;stroke-width:2px}
.rail{fill:none;stroke:#d5d8db;stroke-width:2px}
.rail .yard{stroke:#e6ebf0}
.rail .median{stroke:#dedede;stroke-width:3px}
.motorway{fill:none;stroke-linejoin:round}
.slip-edge{stroke:#f9d06a;stroke-width:16px}
.slip{stroke:#fff0ab;stroke-width:11px}
.lane-edge{stroke:#f7cf65;stroke-width:44px}
.lane{stroke:#ffe99c;stroke-width:40px}
.lane-line{stroke:#f7cf65;stroke-width:25px}
.lane-inner{stroke:#ffe99c;stroke-width:21px}
.lane-mid{stroke:#f7cf65;stroke-width:5px}
.ferry-line{fill:none;stroke:#8fbff5;stroke-width:2px;stroke-dasharray:15 7}
.seam{stroke:#b9dcf5;stroke-width:1px}
.map text{stroke:#fff;stroke-width:4px;stroke-linejoin:round;stroke-opacity:.85;paint-order:stroke;font-family:Roboto,"Liberation Sans",sans-serif}
.street text{font-size:20px;fill:#7b8487}
.street .small{font-size:18px}
.street .olive{fill:#5c5c4a}
.street.main text{font-size:24px;font-weight:500;fill:#66757a}
.water-name text{font-size:28px;fill:#4f80c4;stroke:none}
.water-name .small{font-size:22px}
.district text{font-size:29px;font-weight:700;letter-spacing:5px;fill:#6b7a8d}
.place text{font-size:28px;font-weight:500}
.place .sub{font-size:24px}
.green{fill:#26832a}.cyan{fill:#0a8fd0}.blue{fill:#4272b8}.orange{fill:#d2784a}
.shields use{fill:#fff;stroke:#666;stroke-width:3px}
.shields text{font-size:21px;text-anchor:middle;fill:#444;stroke:none}
.shields .red{fill:#dc5f5f}
.shields .on-red{fill:#fff;font-weight:700;font-size:20px}
.shields .gold{fill:#ffe168;stroke:#e3b94f;stroke-width:2px}
.halo,.white{fill:#fff}
.transit{fill:#12b5fb}
.pin-green{fill:#4db546}.pin-blue{fill:#4b96f3}.pin-orange{fill:#ff9e67}
.smile{fill:none;stroke:#4b96f3;stroke-width:2px}
.map .logo text{font-family:Lato,sans-serif;font-size:44px;font-weight:700;stroke-width:3px}
.g-blue{fill:#4285f4}.g-red{fill:#ea4335}.g-yellow{fill:#fbbc05}.g-green{fill:#34a853}
.area path{fill:#ff0000;fill-opacity:.35;stroke:#ff2020;stroke-width:5px}
.area circle{fill:#fff;stroke:#f00;stroke-width:2px}
.area .mid{opacity:.55}
```
